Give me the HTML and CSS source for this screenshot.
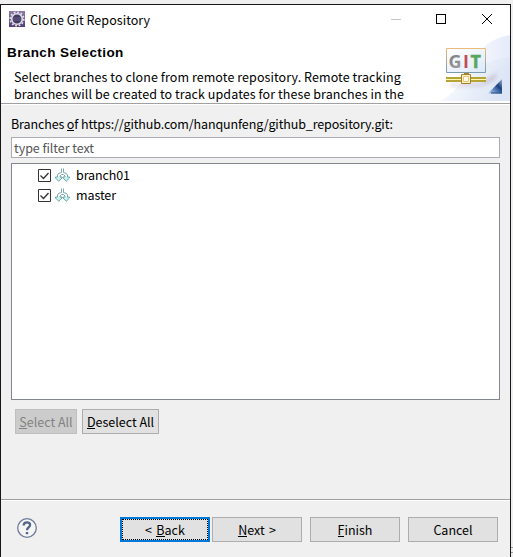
FILE: index.html
```html
<!DOCTYPE html>
<html lang="en">
<head>
<meta charset="utf-8">
<title>Clone Git Repository</title>
<link rel="stylesheet" href="styles.css">
</head>
<body>
<main class="window">
  <header class="titlebar">
    <svg class="app-icon" width="16" height="16" viewBox="0 0 16 16">
      <defs><linearGradient id="app" x2="0" y2="1"><stop stop-color="#8d7baa"/><stop offset="1" stop-color="#4e3d73"/></linearGradient></defs>
      <path fill="url(#app)" d="M0 0h16v16H0z"/>
      <circle cx="8" cy="8" r="6.8" fill="none" stroke="#e6e3e8" stroke-width="1.6" stroke-dasharray="1.8 1.76"/>
      <circle cx="8" cy="8" r="5.3" fill="#413b63" stroke="#e2dfe5" stroke-width="1.6"/>
      <path d="M4 7h8M4 9h8" stroke="#706990" stroke-width=".8"/>
    </svg>
    <span class="title">Clone Git Repository</span>
    <svg class="controls" width="104" height="12" viewBox="0 0 104 12" fill="none" shape-rendering="crispEdges">
      <path d="M0 5.5h10" stroke="#c5c5c5"/>
      <path d="M45.5 .5h9v9h-9z" stroke="#000"/>
      <path d="M91 0l10 10M101 0L91 10" stroke="#000" shape-rendering="auto"/>
    </svg>
  </header>
  <section class="banner">
    <div class="intro">
      <h1>Branch Selection</h1>
      <p><span class="line1">Select branches to clone from remote repository. Remote tracking</span><br><span class="line2">branches will be created to track updates for these branches in the</span></p>
    </div>
    <svg class="art" width="75" height="66" viewBox="0 0 75 66">
      <defs>
        <linearGradient id="glow" x1="0" y1="0" x2="1" y2=".3"><stop offset=".1" stop-color="#fff"/><stop offset="1" stop-color="#dce5f6"/></linearGradient>
        <linearGradient id="arc" x1="0" y1="0" x2="1" y2="0"><stop stop-color="#fff"/><stop offset="1" stop-color="#e5ebfa"/></linearGradient>
        <linearGradient id="screen" x2="1" y2="1"><stop stop-color="#fff"/><stop offset="1" stop-color="#dce9fa"/></linearGradient>
        <linearGradient id="edge" x2="0" y2="1"><stop stop-color="#e9bd79"/><stop offset="1" stop-color="#799bac"/></linearGradient>
        <linearGradient id="corner" x1="0" y1="1" x2="1" y2="0"><stop stop-color="#bfd6ee"/><stop offset=".45" stop-color="#416fac"/><stop offset=".62" stop-color="#1f407e"/><stop offset="1" stop-color="#9ab6dc"/></linearGradient>
        <linearGradient id="gray" x2="1" y2="1"><stop stop-color="#777"/><stop offset="1" stop-color="#b4b4b4"/></linearGradient>
        <filter id="soft" x="-20%" y="-50%" width="140%" height="200%"><feGaussianBlur stdDeviation="2"/></filter>
      </defs>
      <path fill="url(#arc)" d="M22 66C32 24 49 4 75 0v66z"/>
      <path fill="url(#glow)" d="M0 66c22 0 31-41 75-44v44z"/>
      <g transform="translate(1)">
        <path d="M14 49h31l17-12-4 8-13 6H14z" fill="#b3a4b9" opacity=".65" filter="url(#soft)"/>
        <path d="M10.500 13.500h39v24h-39z" fill="url(#screen)" stroke="url(#edge)"/>
        <text class="logo" y="32.500"><tspan class="g" x="12.500">G</tspan><tspan class="i" x="27">I</tspan><tspan class="t" x="34.500">T</tspan></text>
        <path d="M10 42h40v5H10z" fill="#b6a532"/><path d="M10 44.500h40" stroke="#fff9b3"/>
        <path d="M28 38h5v3h-5z" fill="#a9852b"/><path d="M25.500 39.500h9v9h-9z" fill="#fff0b7" stroke="#a27e2e"/><path d="M27.500 41.500h5v5h-5z" fill="#fffbea" stroke="#e2c785"/>
        <path d="M52 58.500 66 44v14.500z" fill="url(#corner)"/><path d="M55 58h11" stroke="#254a81"/>
      </g>
    </svg>
  </section>
  <section class="content">
    <label class="caption">Branches <u>o</u>f https://github.com/hanqunfeng/github_repository.git:</label>
    <div class="filter"><span>type filter text</span></div>
    <div class="branches">
      <div class="branch">
        <svg class="check" width="13" height="13" viewBox="0 0 13 13"><path d="M.5.5h12v12H.5z" fill="#fff" stroke="#333"/><path d="M2.500 6.500l3 3 5-5.500" fill="none" stroke="#333" stroke-width="1.300"/></svg>
        <svg class="fork" width="15" height="14" viewBox="0 0 15 14"><g id="fork-shape" stroke="#6a9da2" stroke-width=".9"><path d="M6.500 .5v4L3.500 5.500 2.500 7v2.500M8.500 .5v4l3 1L12.500 7v2.500M5 9.500V8l1.500-1.500h2L10 8v1.500" fill="none"/><path d="M2.500 9H.5v1l3.300 3.300L7 10V9H5M10 9H8v1l3.200 3.300L14.500 10V9h-2" fill="#c4f2f1"/></g></svg>
        <span class="name">branch01</span>
      </div>
      <div class="branch">
        <svg class="check" width="13" height="13" viewBox="0 0 13 13"><path d="M.5.5h12v12H.5z" fill="#fff" stroke="#333"/><path d="M2.500 6.500l3 3 5-5.500" fill="none" stroke="#333" stroke-width="1.300"/></svg>
        <svg class="fork" width="15" height="14" viewBox="0 0 15 14"><use href="#fork-shape"/></svg>
        <span class="name">master</span>
      </div>
    </div>
    <div class="selection">
      <button class="select" disabled><span><u>S</u>elect All</span></button>
      <button class="deselect"><span><u>D</u>eselect All</span></button>
    </div>
  </section>
  <footer class="footer">
    <svg class="help" width="20" height="20" viewBox="0 0 20 20"><circle cx="10" cy="10" r="9.300" fill="#f5f5f5" stroke="#6c7c99" stroke-width="1.300"/><path d="M6.600 7.500C6.800 3.200 13.300 3.500 13.100 7c-.1 2.400-3.100 2.500-3.100 5.300" fill="none" stroke="#526487" stroke-width="2.300"/><path d="M8.800 14h2.400v2.200H8.800z" fill="#526487"/></svg>
    <button class="nav back"><span>&lt; <u>B</u>ack</span></button>
    <button class="nav next"><span><u>N</u>ext &gt;</span></button>
    <button class="nav finish"><span><u>F</u>inish</span></button>
    <button class="nav cancel"><span>Cancel</span></button>
  </footer>
</main>
<aside class="outside"></aside>
</body>
</html>
```
FILE: styles.css
```css
* { box-sizing: border-box; }
body { margin: 0; padding-top: 4px; width: 513px; height: 557px; overflow: hidden; display: flex; background: #efefef; color: #000; font: 12.5px/17px "Noto Sans CJK SC", "Noto Sans", sans-serif; }
.window { width: 511px; height: 553px; border: 1px solid #17171a; border-bottom: 0; background: #f0f0f0; display: flex; flex-direction: column; }
.outside { width: 2px; height: 553px; background: linear-gradient(#efefef 543px, #a0a0a0 543px 544px, #efefef 544px 548px, #a0a0a0 548px 549px, #efefef 549px); }
.titlebar { height: 30px; flex: none; background: #fff; display: flex; align-items: flex-start; padding: 6px 15px 0 8px; }
.title { margin: 0 0 0 5px; letter-spacing: .05px; }
.controls { margin: 3px 0 0 auto; }
.banner { height: 68px; flex: none; display: flex; justify-content: space-between; background: #fff; }
.intro { padding: 9px 0 0 6px; white-space: nowrap; }
h1 { font: bold 13.5px/17px "Liberation Sans", Arial, sans-serif; letter-spacing: .4px; margin: 0 0 7px; }
p { margin: 0 0 0 7px; letter-spacing: .08px; }
.art { flex: none; }
.logo { font: bold 18px "Open Sans", "Noto Sans", sans-serif; }
.g { fill: url(#gray); }
.i { fill: #c34d55; }
.t { fill: #58a75c; stroke: #58a75c; stroke-width: .5px; }
.content { border-top: 1px solid #a0a0a0; box-shadow: inset 0 1px #fff; height: 396px; flex: none; padding: 11px 10px 0; }
.caption { display: block; height: 22px; white-space: nowrap; letter-spacing: -.12px; }
u { text-decoration: none; box-shadow: inset 0 -1px currentColor; display: inline-block; line-height: 15px; }
.filter { height: 21px; background: #fff; border: 1px solid #abadb3; padding: 1px 2px; color: #555; margin-bottom: 5px; letter-spacing: -.05px; }
.branches { height: 237px; background: #fff; border: 1px solid #828790; padding: 1px 0 0 26px; }
.branch { height: 20px; display: flex; align-items: center; }
.name { margin-top: -2px; letter-spacing: -.1px; }
.fork { margin: 0 6px 0 4px; }
.selection { display: flex; gap: 5px; padding: 9px 0 0 4px; }
button { font: inherit; color: #000; height: 25px; padding: 0; border: 1px solid #adadad; background: #e1e1e1; white-space: nowrap; }
.select { width: 62px; color: #838383; background: #ccc; border-color: #bfbfbf; }
.deselect { width: 77px; }
.footer { border-top: 1px solid #a0a0a0; box-shadow: inset 0 1px #fff; flex: 1; display: flex; align-items: flex-start; padding: 17px 12px 0 16px; }
.help { margin: 1px auto 0 0; }
.nav { width: 90px; }
.back { border: 2px solid #0078d7; outline: 1px dotted #000; outline-offset: -3px; }
.back span, .next span { word-spacing: 1.5px; }
.next { margin: 0 8px 0 2px; }
.finish { margin-right: 8px; }
```
